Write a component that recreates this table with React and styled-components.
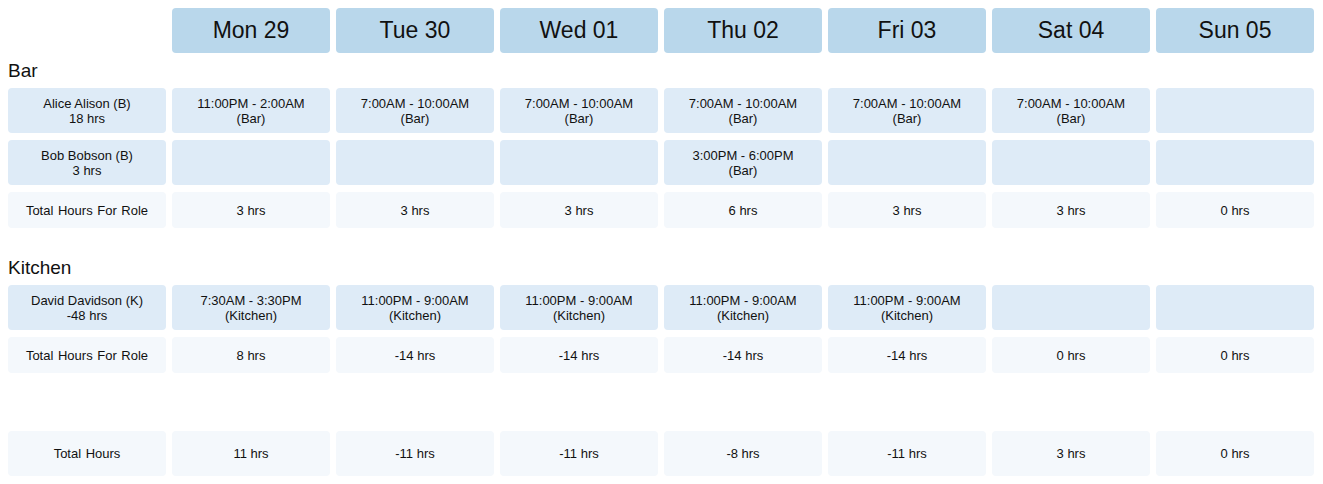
import styled, { createGlobalStyle } from "styled-components";

const GlobalStyle = createGlobalStyle`
  body {
    margin: 8px;
    background: #ffffff;
    font-family: "Liberation Sans", Arial, sans-serif;
    color: #111111;
  }
`;

const days = ["Mon 29", "Tue 30", "Wed 01", "Thu 02", "Fri 03", "Sat 04", "Sun 05"];

const sections = [
  {
    name: "Bar",
    people: [
      {
        name: "Alice Alison (B)",
        hours: "18 hrs",
        shifts: [
          ["11:00PM - 2:00AM", "(Bar)"],
          ["7:00AM - 10:00AM", "(Bar)"],
          ["7:00AM - 10:00AM", "(Bar)"],
          ["7:00AM - 10:00AM", "(Bar)"],
          ["7:00AM - 10:00AM", "(Bar)"],
          ["7:00AM - 10:00AM", "(Bar)"],
          null,
        ],
      },
      {
        name: "Bob Bobson (B)",
        hours: "3 hrs",
        shifts: [null, null, null, ["3:00PM - 6:00PM", "(Bar)"], null, null, null],
      },
    ],
    totals: ["3 hrs", "3 hrs", "3 hrs", "6 hrs", "3 hrs", "3 hrs", "0 hrs"],
  },
  {
    name: "Kitchen",
    people: [
      {
        name: "David Davidson (K)",
        hours: "-48 hrs",
        shifts: [
          ["7:30AM - 3:30PM", "(Kitchen)"],
          ["11:00PM - 9:00AM", "(Kitchen)"],
          ["11:00PM - 9:00AM", "(Kitchen)"],
          ["11:00PM - 9:00AM", "(Kitchen)"],
          ["11:00PM - 9:00AM", "(Kitchen)"],
          null,
          null,
        ],
      },
    ],
    totals: ["8 hrs", "-14 hrs", "-14 hrs", "-14 hrs", "-14 hrs", "0 hrs", "0 hrs"],
  },
];

const grandTotals = ["11 hrs", "-11 hrs", "-11 hrs", "-8 hrs", "-11 hrs", "3 hrs", "0 hrs"];

const Schedule = styled.div`
  display: flex;
  flex-direction: column;
  width: 1306px;
`;

const Row = styled.div`
  display: grid;
  grid-template-columns: repeat(8, 158px);
  column-gap: 6px;
  height: ${(p) => p.$height || 45}px;
  margin-top: ${(p) => p.$gap || 0}px;
`;

const DayHeader = styled.div`
  display: flex;
  align-items: center;
  justify-content: center;
  background: #b9d7eb;
  border-radius: 4px;
  font-size: 23px;
  color: #111111;
`;

const SectionTitle = styled.div`
  display: flex;
  align-items: center;
  height: 35px;
  margin-top: ${(p) => p.$gap || 0}px;
  font-size: 19px;
  padding-left: 0;
`;

const Cell = styled.div`
  display: flex;
  flex-direction: column;
  align-items: center;
  justify-content: center;
  background: ${(p) => (p.$total ? "#f4f8fc" : "#deebf7")};
  border-radius: 4px;
  font-size: 13px;
  line-height: 15px;
  text-align: center;
  word-spacing: ${(p) => (p.$label ? "1px" : "0")};
`;

export default function App() {
  return (
    <>
      <GlobalStyle />
      <Schedule>
        <Row>
          <div />
          {days.map((d) => (
            <DayHeader key={d}>{d}</DayHeader>
          ))}
        </Row>

        {sections.map((section, si) => (
          <div key={section.name}>
            <SectionTitle $gap={si === 0 ? 0 : 22}>{section.name}</SectionTitle>
            {section.people.map((person, pi) => (
              <Row key={person.name} $gap={pi === 0 ? 0 : 7}>
                <Cell>
                  <span>{person.name}</span>
                  <span>{person.hours}</span>
                </Cell>
                {person.shifts.map((shift, i) => (
                  <Cell key={i}>
                    {shift && (
                      <>
                        <span>{shift[0]}</span>
                        <span>{shift[1]}</span>
                      </>
                    )}
                  </Cell>
                ))}
              </Row>
            ))}
            <Row $height={36} $gap={7}>
              <Cell $total $label>
                Total Hours For Role
              </Cell>
              {section.totals.map((t, i) => (
                <Cell $total key={i}>
                  {t}
                </Cell>
              ))}
            </Row>
          </div>
        ))}

        <Row $gap={58}>
          <Cell $total $label>
            Total Hours
          </Cell>
          {grandTotals.map((t, i) => (
            <Cell $total key={i}>
              {t}
            </Cell>
          ))}
        </Row>
      </Schedule>
    </>
  );
}
